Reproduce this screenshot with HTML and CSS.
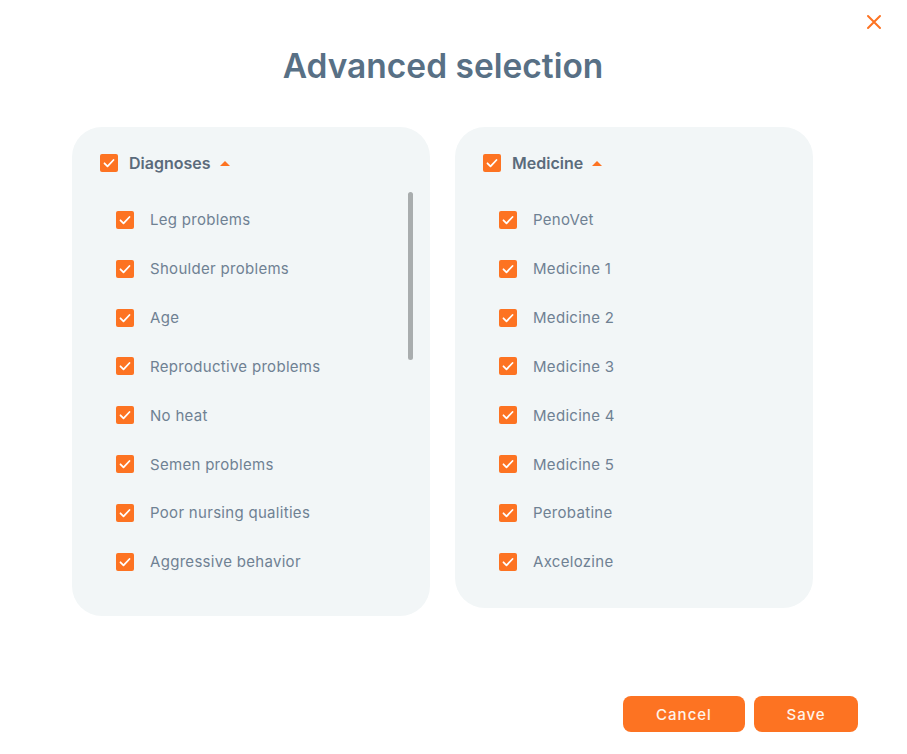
FILE: index.html
```html
<!DOCTYPE html>
<html>
<head>
<meta charset="utf-8">
<link rel="stylesheet" href="styles.css">
</head>
<body>
<div class="dialog">
  <button class="close" aria-label="Close">
    <svg width="16" height="16" viewBox="0 0 16 16"><path d="M2 2L14 14M14 2L2 14" stroke="#fd7322" stroke-width="2" stroke-linecap="round"/></svg>
  </button>
  <h1 class="title">Advanced selection</h1>
  <div class="columns">
    <section class="card card-left">
      <div class="group-head">
        <span class="cb"><svg viewBox="0 0 18 18"><path d="M4.5 9.3l3 3 6-6.3" fill="none" stroke="#fff" stroke-width="1.8" stroke-linecap="round" stroke-linejoin="round"/></svg></span>
        <span class="group-name">Diagnoses</span>
        <span class="caret"></span>
      </div>
      <ul class="list">
        <li><span class="cb"><svg viewBox="0 0 18 18"><path d="M4.5 9.3l3 3 6-6.3" fill="none" stroke="#fff" stroke-width="1.8" stroke-linecap="round" stroke-linejoin="round"/></svg></span>Leg problems</li>
        <li><span class="cb"><svg viewBox="0 0 18 18"><path d="M4.5 9.3l3 3 6-6.3" fill="none" stroke="#fff" stroke-width="1.8" stroke-linecap="round" stroke-linejoin="round"/></svg></span>Shoulder problems</li>
        <li><span class="cb"><svg viewBox="0 0 18 18"><path d="M4.5 9.3l3 3 6-6.3" fill="none" stroke="#fff" stroke-width="1.8" stroke-linecap="round" stroke-linejoin="round"/></svg></span>Age</li>
        <li><span class="cb"><svg viewBox="0 0 18 18"><path d="M4.5 9.3l3 3 6-6.3" fill="none" stroke="#fff" stroke-width="1.8" stroke-linecap="round" stroke-linejoin="round"/></svg></span>Reproductive problems</li>
        <li><span class="cb"><svg viewBox="0 0 18 18"><path d="M4.5 9.3l3 3 6-6.3" fill="none" stroke="#fff" stroke-width="1.8" stroke-linecap="round" stroke-linejoin="round"/></svg></span>No heat</li>
        <li><span class="cb"><svg viewBox="0 0 18 18"><path d="M4.5 9.3l3 3 6-6.3" fill="none" stroke="#fff" stroke-width="1.8" stroke-linecap="round" stroke-linejoin="round"/></svg></span>Semen problems</li>
        <li><span class="cb"><svg viewBox="0 0 18 18"><path d="M4.5 9.3l3 3 6-6.3" fill="none" stroke="#fff" stroke-width="1.8" stroke-linecap="round" stroke-linejoin="round"/></svg></span>Poor nursing qualities</li>
        <li><span class="cb"><svg viewBox="0 0 18 18"><path d="M4.5 9.3l3 3 6-6.3" fill="none" stroke="#fff" stroke-width="1.8" stroke-linecap="round" stroke-linejoin="round"/></svg></span>Aggressive behavior</li>
      </ul>
      <div class="scroll-thumb"></div>
    </section>
    <section class="card card-right">
      <div class="group-head">
        <span class="cb"><svg viewBox="0 0 18 18"><path d="M4.5 9.3l3 3 6-6.3" fill="none" stroke="#fff" stroke-width="1.8" stroke-linecap="round" stroke-linejoin="round"/></svg></span>
        <span class="group-name">Medicine</span>
        <span class="caret"></span>
      </div>
      <ul class="list">
        <li><span class="cb"><svg viewBox="0 0 18 18"><path d="M4.5 9.3l3 3 6-6.3" fill="none" stroke="#fff" stroke-width="1.8" stroke-linecap="round" stroke-linejoin="round"/></svg></span>PenoVet</li>
        <li><span class="cb"><svg viewBox="0 0 18 18"><path d="M4.5 9.3l3 3 6-6.3" fill="none" stroke="#fff" stroke-width="1.8" stroke-linecap="round" stroke-linejoin="round"/></svg></span>Medicine 1</li>
        <li><span class="cb"><svg viewBox="0 0 18 18"><path d="M4.5 9.3l3 3 6-6.3" fill="none" stroke="#fff" stroke-width="1.8" stroke-linecap="round" stroke-linejoin="round"/></svg></span>Medicine 2</li>
        <li><span class="cb"><svg viewBox="0 0 18 18"><path d="M4.5 9.3l3 3 6-6.3" fill="none" stroke="#fff" stroke-width="1.8" stroke-linecap="round" stroke-linejoin="round"/></svg></span>Medicine 3</li>
        <li><span class="cb"><svg viewBox="0 0 18 18"><path d="M4.5 9.3l3 3 6-6.3" fill="none" stroke="#fff" stroke-width="1.8" stroke-linecap="round" stroke-linejoin="round"/></svg></span>Medicine 4</li>
        <li><span class="cb"><svg viewBox="0 0 18 18"><path d="M4.5 9.3l3 3 6-6.3" fill="none" stroke="#fff" stroke-width="1.8" stroke-linecap="round" stroke-linejoin="round"/></svg></span>Medicine 5</li>
        <li><span class="cb"><svg viewBox="0 0 18 18"><path d="M4.5 9.3l3 3 6-6.3" fill="none" stroke="#fff" stroke-width="1.8" stroke-linecap="round" stroke-linejoin="round"/></svg></span>Perobatine</li>
        <li><span class="cb"><svg viewBox="0 0 18 18"><path d="M4.5 9.3l3 3 6-6.3" fill="none" stroke="#fff" stroke-width="1.8" stroke-linecap="round" stroke-linejoin="round"/></svg></span>Axcelozine</li>
      </ul>
    </section>
  </div>
  <div class="actions">
    <button class="btn btn-cancel">Cancel</button>
    <button class="btn btn-save">Save</button>
  </div>
</div>
</body>
</html>
```

FILE: styles.css
```css
* { box-sizing: border-box; }
html, body {
  margin: 0;
  padding: 0;
  background: #ffffff;
}
body {
  font-family: "Inter", "Noto Sans", sans-serif;
}
.dialog {
  position: relative;
  width: 907px;
  height: 754px;
  display: flex;
  flex-direction: column;
}
.close {
  position: absolute;
  top: 14px;
  right: 25px;
  width: 16px;
  height: 16px;
  padding: 0;
  border: 0;
  background: none;
  cursor: pointer;
}
.close svg { display: block; }
.title {
  margin: 44px 0 0;
  padding-right: 21px;
  text-align: center;
  font-size: 33.5px;
  line-height: 44px;
  font-weight: 600;
  color: #587085;
}
.columns {
  display: flex;
  align-items: flex-start;
  gap: 25px;
  margin-top: 39px;
  padding-left: 72px;
}
.card {
  position: relative;
  width: 358px;
  background: #f2f6f7;
  border-radius: 30px;
  padding: 27px 0 0 28px;
}
.card-left { padding-bottom: 30px; }
.card-right { padding-bottom: 22px; }
.group-head {
  display: flex;
  align-items: center;
  height: 18px;
}
.cb {
  flex: none;
  width: 18px;
  height: 18px;
  border-radius: 2px;
  background: #fd7322;
  display: inline-flex;
}
.cb svg { width: 18px; height: 18px; display: block; }
.group-name {
  margin-left: 11px;
  font-size: 16px;
  font-weight: 600;
  color: #5b6b7b;
}
.caret {
  margin-left: 9px;
  width: 0;
  height: 0;
  border-left: 5px solid transparent;
  border-right: 5px solid transparent;
  border-bottom: 5px solid #fd7322;
}
.list {
  list-style: none;
  margin: 23.5px 0 0;
  padding: 0 0 0 16px;
}
.list li {
  display: flex;
  align-items: center;
  height: 48.85px;
  font-size: 15px;
  letter-spacing: 0.3px;
  color: #6f8193;
}
.list li .cb { margin-right: 16px; }
.scroll-thumb {
  position: absolute;
  top: 65px;
  right: 17px;
  width: 5px;
  height: 168px;
  border-radius: 3px;
  background: #a9adae;
}
.actions {
  display: flex;
  justify-content: flex-end;
  gap: 9px;
  margin-top: auto;
  padding: 0 49px 22px 0;
}
.btn {
  height: 36px;
  border: 0;
  border-radius: 8px;
  background: #fd7322;
  color: #fff3ea;
  font-family: inherit;
  font-size: 15px;
  font-weight: 500;
  letter-spacing: 1px;
  cursor: pointer;
}
.btn-cancel { width: 122px; }
.btn-save { width: 104px; }
```
